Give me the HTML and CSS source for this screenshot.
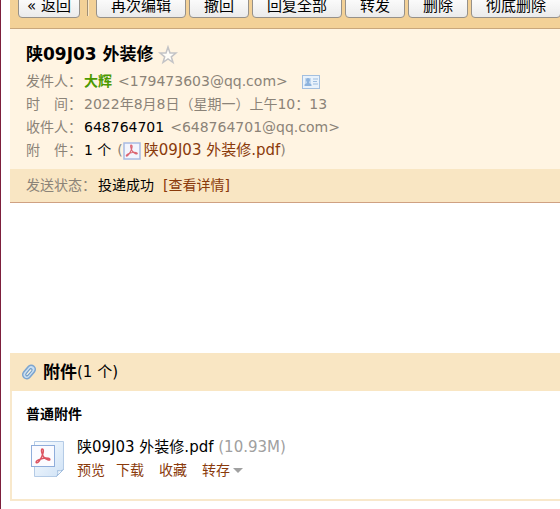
FILE: index.html
```html
<!DOCTYPE html>
<html lang="zh-CN">
<head>
    <meta charset="UTF-8">
    <title>陕09J03 外装修</title>
    <link rel="stylesheet" href="styles.css">
</head>
<body>
<div class="mail">

    <div class="toolbar">
        <button type="button" class="btn btn_back">« 返回</button>
        <span class="line"></span>
        <button type="button" class="btn">再次编辑</button>
        <button type="button" class="btn">撤回</button>
        <button type="button" class="btn">回复全部</button>
        <button type="button" class="btn">转发</button>
        <button type="button" class="btn">删除</button>
        <button type="button" class="btn">彻底删除</button>
    </div>

    <div class="info">
        <h1 class="subject">陕09J03 外装修
            <svg class="star" width="20" height="20" viewBox="0 0 20 20">
                <path d="M10 2l2 6h6l-4.700 3.800 1.700 5.700-5-3.500-5 3.500 1.700-5.700L2 8h6z" fill="#fffdf8" stroke="#c3c3c6" stroke-width="1.500"/>
            </svg>
        </h1>
        <div class="row">
            <span class="label">发件人：</span>
            <b class="sender">大辉</b>
            <span class="addr">&lt;179473603@qq.com&gt;</span>
            <svg class="card" width="18" height="14" viewBox="0 0 18 14">
                <rect x=".5" y=".5" width="17" height="13" fill="#e9f2fb" stroke="#a3bfdf"/>
                <path d="M3 3h6v8H3z" fill="#c3d9f0"/>
                <circle cx="6" cy="5" r="2" fill="#8db3dd"/>
                <path d="M5 6h2v2l2.500 1.500V11h-7V9.500L5 8z" fill="#8db3dd"/>
                <path d="M11 4h5M11 6.500h4M11 9h5" stroke="#9dbde0"/>
            </svg>
        </div>
        <div class="row">
            <span class="label">时　间：</span>
            <span class="addr date">2022年8月8日（星期一）上午10：13</span>
        </div>
        <div class="row">
            <span class="label">收件人：</span>
            <span>648764701</span>
            <span class="addr">&lt;648764701@qq.com&gt;</span>
        </div>
        <div class="row">
            <span class="label">附　件：</span>
            <span>1 个</span>
            <span class="file"><span class="addr">(</span><svg class="pdf" width="18" height="18" viewBox="0 0 18 18">
                <rect x="1" y="1" width="16" height="16" fill="#f3f5fd" stroke="#a9bbe3" stroke-width="1.500"/>
                <path d="M8 3c2 0 .8 4-.3 6.200C6.500 11.700 4.500 14.500 3.500 14c-1.200-1 3-3.200 6-3.500 2.800-.3 5 .2 4.800 1.100-.3 1-3-.3-4.600-2C8 7.800 7.200 3 8 3z" fill="none" stroke="#dc6672" stroke-width="1.200"/>
            </svg><a href="#attach" class="name">陕09J03 外装修.pdf</a><span class="addr">)</span></span>
        </div>
    </div>

    <div class="status">
        <span class="label">发送状态：</span>
        <span>投递成功</span>
        <a href="#" class="detail">[查看详情]</a>
    </div>

    <div class="content"></div>

    <div class="attach" id="attach">
        <div class="attach_top">
            <svg class="clip" width="16" height="18" viewBox="0 0 16 18">
                <g transform="rotate(40 8 9)" fill="none" stroke-linecap="round">
                    <rect x="4" y="1.500" width="8" height="15" rx="4" fill="#c9dff2" stroke="#7da5cf" stroke-width="1.600"/>
                    <path d="M6.800 12V6.500c0-2 2.600-2 2.600 0V12c0 2-2.600 2-2.600 0z" fill="#f4f1e4" stroke="#6f9bc7" stroke-width="1.100"/>
                </g>
            </svg>
            <h2>附件</h2><span class="count">(1 个)</span>
        </div>
        <div class="attach_main">
            <h3>普通附件</h3>
            <div class="item">
                <svg class="file_icon" width="36" height="38" viewBox="0 0 36 38">
                    <defs>
                        <linearGradient id="paper" x1="0" y1="0" x2="1" y2="1">
                            <stop offset="0" stop-color="#fafdff"/>
                            <stop offset="1" stop-color="#cfe2f6"/>
                        </linearGradient>
                    </defs>
                    <path d="M4.500 1.500h29v28l-7 7h-22z" fill="url(#paper)" stroke="#b4cbe6"/>
                    <path d="M33.500 29.500c-2 1.500-4 1.500-6 1 .5 2.500.5 4-1 6z" fill="#f7fbff" stroke="#a3bfdf"/>
                    <rect x="1.500" y="5.500" width="23" height="21" fill="#fbfbff" stroke="#8faddb"/>
                    <path d="M12 9c2.500 0 1 5-.4 8-1.600 3.300-4 6.500-5.300 5.700-1.300-1.200 3.500-4 7.200-4.500 3.800-.5 6.700.4 6.300 1.500-.5 1.200-4-.6-6-2.600-2-2.200-3-8.100-1.800-8.100z" fill="none" stroke="#dc5462" stroke-width="1.500"/>
                </svg>
                <div class="item_text">
                    <div class="name">陕09J03 外装修.pdf <span class="size">(10.93M)</span></div>
                    <div class="links">
                        <a href="#">预览</a>
                        <a href="#">下载</a>
                        <a href="#" class="wide">收藏</a>
                        <a href="#" class="wide more">转存</a>
                    </div>
                </div>
            </div>
        </div>
    </div>

</div>
</body>
</html>
```

FILE: styles.css
```css
body, h1, h2, h3 {
    margin: 0;
    padding: 0;
}
html {
    height: 100%;
}
body {
    box-sizing: border-box;
    min-height: 100%;
    padding-left: 9px;
    border-left: 1px solid #7d1f3c;
    background: #fff;
    color: #000;
    font: 14px/23px "DejaVu Sans", "Noto Sans CJK SC", sans-serif;
    overflow: hidden;
}
a {
    color: #8a3a0b;
    text-decoration: none;
}
svg {
    flex: none;
}

/* toolbar */
.toolbar {
    display: flex;
    align-items: flex-end;
    gap: 3px;
    height: 18px;
    padding: 0 0 10px 8px;
    overflow: hidden;
    background: #f3d197;
    border-bottom: 1px solid #c9a77c;
}
.btn {
    flex: none;
    height: 24px;
    padding: 0 14px;
    border: 1px solid #96918a;
    border-radius: 4px;
    background: linear-gradient(#fff, #ebebeb);
    color: #000;
    font: 15px/22px "DejaVu Sans", "Noto Sans CJK SC", sans-serif;
    white-space: nowrap;
}
.btn_back {
    padding: 0 8px;
}
.line {
    flex: none;
    width: 1px;
    height: 22px;
    margin: 0 4px 2px;
    background: #a08f76;
    border-right: 1px solid #fbe9c8;
}

/* mail header */
.info {
    padding: 10px 16px 7px;
    background: #fff4e2;
}
.subject {
    display: flex;
    align-items: center;
    gap: 4px;
    height: 31px;
    font-size: 17px;
    white-space: nowrap;
}
.row, .status {
    display: flex;
    align-items: center;
    gap: 6px;
    white-space: nowrap;
}
.label {
    width: 52px;
    color: #8b8378;
}
.addr {
    color: #8b8378;
}
.date {
    font-family: "DejaVu Sans", "Noto Sans CJK TC", sans-serif;
}
.name {
    font-size: 15px;
}
.sender {
    color: #4c9a00;
}
.card {
    margin-left: 8px;
}
.file {
    display: flex;
    align-items: center;
}
.pdf {
    margin-right: 3px;
}
.status {
    height: 33px;
    padding: 0 16px;
    background: #f9e6c3;
    border-bottom: 1px solid #cfa182;
}
.status .label {
    width: 66px;
}
.detail {
    margin-left: 3px;
}
.content {
    min-height: 150px;
}

/* attachments */
.attach {
    border: 2px solid #f8e8cb;
    border-top: 0;
    border-right: 0;
}
.attach_top {
    display: flex;
    align-items: center;
    height: 38px;
    padding-left: 11px;
    margin-left: -2px;
    background: #f9e6c3;
}
.clip {
    margin-right: 6px;
}
.attach_top h2 {
    font-size: 17px;
}
.count {
    font-size: 15px;
}
.attach_main {
    padding: 12px 14px 17px;
}
.attach_main h3 {
    font-size: 14px;
}
.item {
    display: flex;
    gap: 11px;
    padding: 10px 0 0 4px;
}
.file_icon {
    margin-top: 4px;
}
.size {
    color: #a0a0a0;
}
.links {
    display: flex;
    gap: 11px;
}
.wide {
    margin-left: 4px;
}
.more {
    display: flex;
    align-items: center;
    gap: 3px;
}
.more::after {
    content: "";
    border: 5px solid transparent;
    border-top-color: #a0a0a0;
    border-bottom: 0;
}
```
